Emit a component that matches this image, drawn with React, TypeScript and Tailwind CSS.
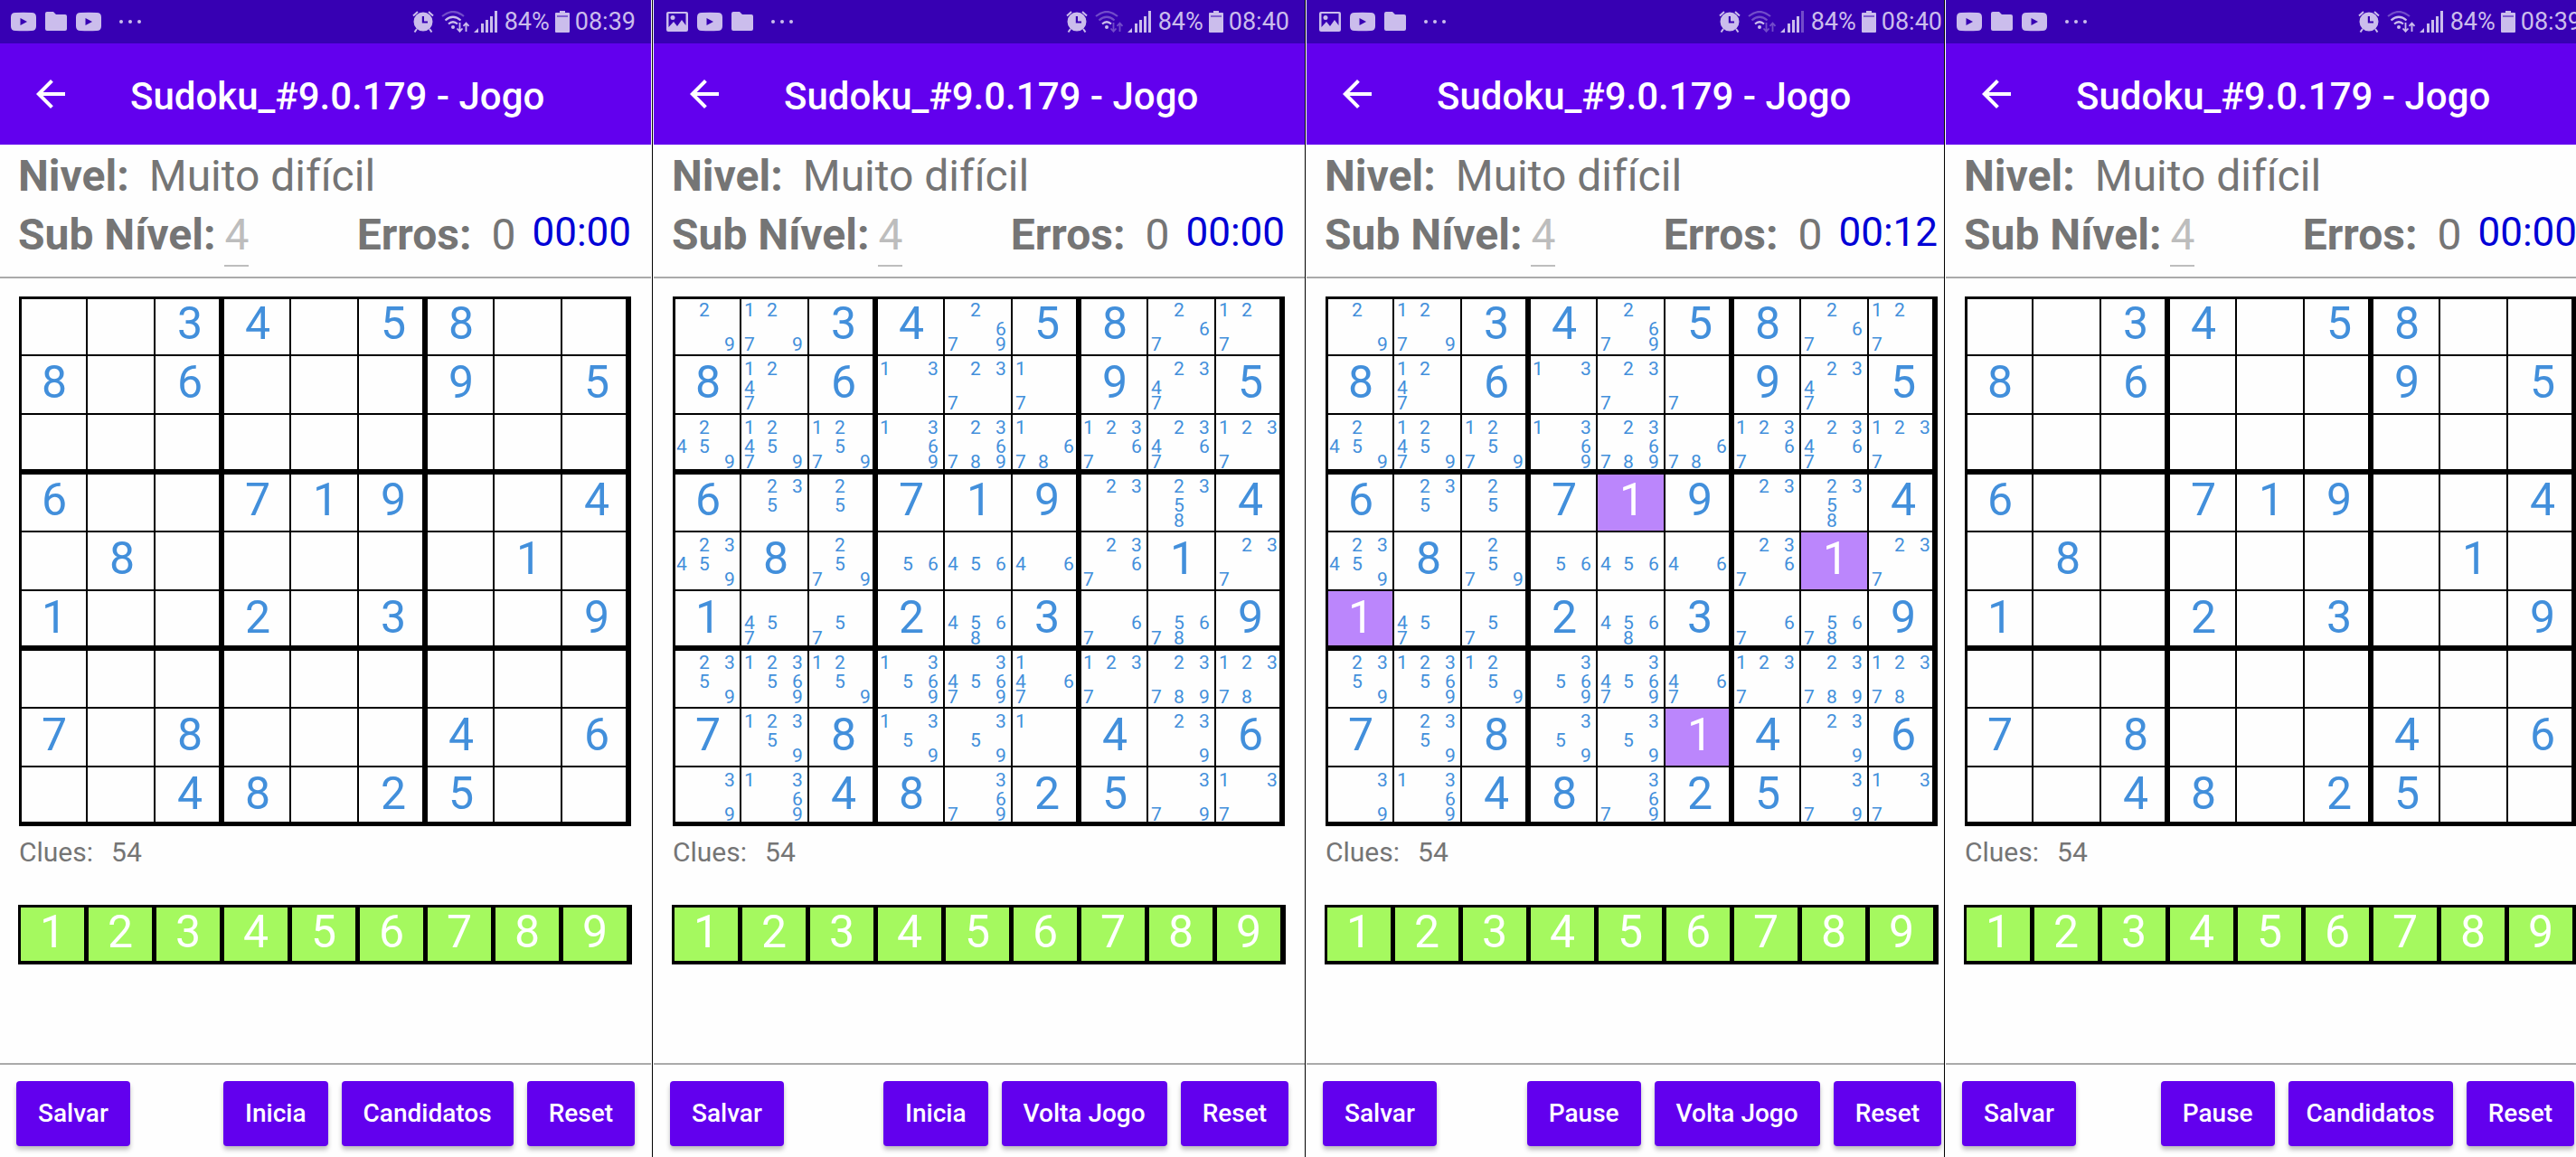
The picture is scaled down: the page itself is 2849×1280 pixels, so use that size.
import React from "react";

type IconName = "play" | "folder" | "image";

type Action = { label: string; tight?: boolean };

type Screen = {
  icons: IconName[];
  clock: string;
  timer: string;
  wifi: "strong" | "idle";
  weakSignal: boolean;
  showCandidates: boolean;
  highlightOnes: boolean;
  actions: Action[];
  bleed: string;
  footerInset: string;
};

const GIVENS = [
  "003405800",
  "806000905",
  "000000000",
  "600719004",
  "080000010",
  "100203009",
  "000000000",
  "708000406",
  "004802500",
];

const CANDIDATES = [
  ["29", "1279", "", "", "2679", "", "", "267", "127"],
  ["", "1247", "", "13", "237", "17", "", "2347", ""],
  ["2459", "124579", "12579", "1369", "236789", "1678", "12367", "23467", "1237"],
  ["", "235", "25", "", "", "", "23", "2358", ""],
  ["23459", "", "2579", "56", "456", "46", "2367", "", "237"],
  ["", "457", "57", "", "4568", "", "67", "5678", ""],
  ["2359", "123569", "1259", "13569", "345679", "1467", "1237", "23789", "12378"],
  ["", "12359", "", "1359", "359", "1", "", "239", ""],
  ["39", "1369", "", "", "3679", "", "", "379", "137"],
];

/* The same board after a 1 has been placed at row 8, column 6. */
const CANDIDATES_AFTER_MOVE = [
  ["29", "1279", "", "", "2679", "", "", "267", "127"],
  ["", "1247", "", "13", "237", "7", "", "2347", ""],
  ["2459", "124579", "12579", "1369", "236789", "678", "12367", "23467", "1237"],
  ["", "235", "25", "", "", "", "23", "2358", ""],
  ["23459", "", "2579", "56", "456", "46", "2367", "", "237"],
  ["", "457", "57", "", "4568", "", "67", "5678", ""],
  ["2359", "123569", "1259", "3569", "345679", "467", "1237", "23789", "12378"],
  ["", "2359", "", "359", "359", "", "", "239", ""],
  ["39", "1369", "", "", "3679", "", "", "379", "137"],
];

const SCREENS: Screen[] = [
  {
    icons: ["play", "folder", "play"], clock: "08:39", timer: "00:00", wifi: "strong", weakSignal: false,
    showCandidates: false, highlightOnes: false,
    actions: [{ label: "Inicia" }, { label: "Candidatos" }, { label: "Reset" }],
    bleed: "", footerInset: "pr-[18px]",
  },
  {
    icons: ["image", "play", "folder"], clock: "08:40", timer: "00:00", wifi: "idle", weakSignal: false,
    showCandidates: true, highlightOnes: false,
    actions: [{ label: "Inicia" }, { label: "Volta Jogo" }, { label: "Reset" }],
    bleed: "", footerInset: "pr-[18px]",
  },
  {
    icons: ["image", "play", "folder"], clock: "08:40", timer: "00:12", wifi: "idle", weakSignal: true,
    showCandidates: true, highlightOnes: true,
    actions: [{ label: "Pause" }, { label: "Volta Jogo" }, { label: "Reset" }],
    bleed: "-mr-[15px]", footerInset: "pr-[18px]",
  },
  {
    icons: ["play", "folder", "play"], clock: "08:39", timer: "00:00", wifi: "strong", weakSignal: false,
    showCandidates: false, highlightOnes: false,
    actions: [{ label: "Pause" }, { label: "Candidatos", tight: true }, { label: "Reset" }],
    bleed: "-mr-[23px]", footerInset: "pr-[25px]",
  },
];

const DIGITS = ["1", "2", "3", "4", "5", "6", "7", "8", "9"];

/* Heavy rules round each 3x3 block, thin rules between cells; padding evens out the inset. */
function columnRules(c: number) {
  if (c === 0) return "border-l-3 pl-0 border-r pr-[3px]";
  if (c % 3 === 0) return "border-l-2 pl-px border-r pr-[3px]";
  if (c % 3 === 1) return "border-l pl-[2px] border-r pr-[3px]";
  return "border-l pl-[2px] border-r-4 pr-0";
}

function rowRules(r: number) {
  if (r === 0) return "border-t-3 pt-0 border-b pb-[3px]";
  if (r % 3 === 0) return "border-t-2 pt-px border-b pb-[3px]";
  if (r % 3 === 1) return "border-t pt-[2px] border-b pb-[3px]";
  return "border-t pt-[2px] border-b-4 pb-0";
}

function NotificationIcon({ name }: { name: IconName }) {
  if (name === "play")
    return (
      <svg width="28" height="22" viewBox="0 0 28 22" fill="currentColor" aria-hidden="true">
        <path fillRule="evenodd" d="M5 1Q14 .4 23 1Q28 1 28 6V16Q28 21 23 21Q14 21.6 5 21Q0 21 0 16V6Q0 1 5 1ZM10.500 7V15L18 11Z" />
      </svg>
    );
  if (name === "folder")
    return (
      <svg width="24" height="22" viewBox="0 0 24 22" fill="currentColor" aria-hidden="true">
        <path d="M2 0H9L12 3H22Q24 3 24 5V19Q24 21 22 21H2Q0 21 0 19V2Q0 0 2 0Z" />
      </svg>
    );
  return (
    <svg width="26" height="22" viewBox="0 0 26 22" fill="currentColor" aria-hidden="true">
      <path fillRule="evenodd" d="M4 0H24Q26 0 26 2V20Q26 22 24 22H4Q2 22 2 20V2Q2 0 4 0ZM4.500 2V17L10 11L14 16L19 9L23.500 15V2Z" />
      <circle cx="9" cy="6.500" r="2.500" />
    </svg>
  );
}

function AlarmIcon() {
  return (
    <svg width="24" height="24" viewBox="0 0 24 24" fill="none" stroke="currentColor" strokeWidth="2" aria-hidden="true">
      <path d="M1 5.500L6 1M23 5.500L18 1M5 20L2.500 23.500M19 20L21.500 23.500" />
      <path fill="currentColor" stroke="none" fillRule="evenodd" d="M12 1.500A10.500 10.500 0 1 1 12 22.500A10.500 10.500 0 1 1 12 1.500ZM10.800 6V13.500H17V11.500H13V6Z" />
    </svg>
  );
}

function WifiIcon({ mode }: { mode: Screen["wifi"] }) {
  const dim = 0.4;
  const strong = mode === "strong";
  return (
    <svg width="32" height="24" viewBox="0 0 32 24" fill="none" stroke="currentColor" strokeWidth="2.200" aria-hidden="true">
      <path opacity={dim} d="M1 6Q13 -4 25 6" />
      <path opacity={strong ? 1 : dim} d="M4.500 10.500Q13 3 21.500 10.500" />
      <path d="M8 14.500Q13 10 18 14.500" />
      <circle cx="13" cy="18" r="2" fill="currentColor" stroke="none" />
      <g opacity={strong ? 1 : dim} strokeWidth="1.800">
        <path d="M20.500 13V22.500M17.500 19.500L20.500 22.800L23.500 19.500" />
        <path d="M27.500 23V13.500M24.500 16.800L27.500 13.500L30.500 16.800" />
      </g>
    </svg>
  );
}

function SignalIcon({ weak }: { weak: boolean }) {
  return (
    <svg width="26" height="24" viewBox="0 0 26 24" fill="currentColor" aria-hidden="true">
      <path d="M0 24L5 19V24Z" />
      <rect x="8" y="14" width="3" height="10" />
      <rect x="13" y="10" width="3" height="14" />
      <rect x="18" y="6" width="3" height="18" />
      <rect x="23" y="0" width="3" height="24" opacity={weak ? 0.4 : 1} />
    </svg>
  );
}

function BatteryIcon() {
  return (
    <svg width="16" height="24" viewBox="0 0 16 24" fill="currentColor" aria-hidden="true">
      <path d="M5 0H11V2H15Q16 2 16 3V23Q16 24 15 24H1Q0 24 0 23V3Q0 2 1 2H5Z" />
      <rect x="2" y="5" width="12" height="2" fill="#3700b3" opacity="0.5" />
    </svg>
  );
}

function StatusBar({ screen }: { screen: Screen }) {
  return (
    <div className="flex h-12 items-center bg-[#3700b3] pr-[17px] pl-3 text-[#cbbdec]">
      <div className="flex items-center gap-[10px]">
        {screen.icons.map((name, i) => (
          <NotificationIcon key={i} name={name} />
        ))}
        <svg className="ml-[10px]" width="24" height="4" viewBox="0 0 24 4" fill="currentColor" aria-hidden="true">
          <circle cx="2" cy="2" r="2" />
          <circle cx="12" cy="2" r="2" />
          <circle cx="22" cy="2" r="2" />
        </svg>
      </div>
      <div className="ml-auto flex items-center text-[27px] leading-none">
        <AlarmIcon />
        <span className="ml-2 flex">
          <WifiIcon mode={screen.wifi} />
        </span>
        <span className="ml-1 flex">
          <SignalIcon weak={screen.weakSignal} />
        </span>
        <span className="ml-2">84%</span>
        <span className="mx-[6px] flex">
          <BatteryIcon />
        </span>
        <span>{screen.clock}</span>
      </div>
    </div>
  );
}

function Cell({ r, c, screen }: { r: number; c: number; screen: Screen }) {
  const table = screen.highlightOnes ? CANDIDATES_AFTER_MOVE : CANDIDATES;
  const placed = screen.highlightOnes && r === 7 && c === 5;
  const value = placed ? "1" : GIVENS[r][c];
  const lit = screen.highlightOnes && value === "1";
  const rules = `border-black p-0 align-top ${columnRules(c)} ${rowRules(r)}`;

  if (value !== "0")
    return (
      <td className={`${rules} ${lit ? "bg-[#bb86fc] text-white" : "text-[#428fdb]"}`}>
        <div className="h-[58px] pl-1 text-center text-[50px] leading-[54px]">{value}</div>
      </td>
    );

  return (
    <td className={`${rules} text-[#428fdb]`}>
      <div className="grid h-[58px] grid-cols-[25px_28px_auto] grid-rows-[24px_18px_16px] items-center pl-px text-[21px] leading-[16px]">
        {screen.showCandidates &&
          DIGITS.map((d) => <span key={d}>{table[r][c].includes(d) ? d : ""}</span>)}
      </div>
    </td>
  );
}

function Board({ screen }: { screen: Screen }) {
  return (
    <table className="w-full table-fixed border-separate border-spacing-0 border-r-2 border-b border-black" aria-label="Sudoku">
      <tbody>
        {GIVENS.map((row, r) => (
          <tr key={r}>
            {row.split("").map((_, c) => (
              <Cell key={c} r={r} c={c} screen={screen} />
            ))}
          </tr>
        ))}
      </tbody>
    </table>
  );
}

function ActionButton({ label, tight }: Action) {
  return (
    <button
      type="button"
      className={`h-[72px] rounded-[4px] bg-[#6200ee] text-[28px] font-medium text-white shadow-[0_4px_5px_rgba(0,0,0,0.25)] ${tight ? "px-5" : "px-6"}`}
    >
      {label}
    </button>
  );
}

function Phone({ screen, id }: { screen: Screen; id: number }) {
  return (
    <section className="min-w-0 overflow-hidden">
      <div className={`flex min-h-screen flex-col ${screen.bleed}`}>
        <StatusBar screen={screen} />
        <header className="flex h-28 items-center bg-[#6200ee] pl-8 text-white">
          <button type="button" aria-label="Voltar">
            <svg width="48" height="48" viewBox="0 0 24 24" fill="currentColor" aria-hidden="true">
              <path d="M20 11H7.830l5.590-5.590L12 4l-8 8 8 8 1.410-1.410L7.830 13H20v-2z" />
            </svg>
          </button>
          <h1 className="ml-16 pt-1 text-[42px] font-medium whitespace-nowrap">Sudoku_#9.0.179 - Jogo</h1>
        </header>

        <div className="border-b-2 border-[#aaaaaa] pr-[22px] pl-5 text-[48px] text-[#757575]">
          <div className="flex h-[70px] items-center gap-[22px] leading-none">
            <span className="font-bold">Nivel:</span>
            <span>Muito difícil</span>
          </div>
          <div className="flex h-[76px] items-start leading-[60px]">
            <label htmlFor={`sub-nivel-${id}`} className="font-bold whitespace-nowrap">Sub Nível:</label>
            <input
              id={`sub-nivel-${id}`}
              defaultValue="4"
              className="ml-[10px] h-[65px] w-[27px] border-b-2 border-[#bdbdbd] pb-[5px] text-[#bdbdbd] outline-none"
            />
            <span className="ml-auto font-bold">Erros:</span>
            <span className="ml-[22px]">0</span>
            <span className="ml-[18px] text-[44px] leading-[54px] text-[#0000d6]">{screen.timer}</span>
          </div>
        </div>

        <main className="flex flex-1 flex-col pt-5 pr-[22px] pl-[21px]">
          <Board screen={screen} />
          <p className="mt-2 flex h-10 items-center gap-5 text-[30px] text-[#757575]">
            <span>Clues:</span>
            <span>54</span>
          </p>
          <div className="mt-[39px] -mr-px -ml-px grid grid-cols-9 gap-[5px] border-t-3 border-r-6 border-b-4 border-l-3 border-black bg-black">
            {DIGITS.map((d) => (
              <button key={d} type="button" className="h-[59px] bg-[#a5f95f] pb-1 text-[50px] leading-[55px] text-white">
                {d}
              </button>
            ))}
          </div>
        </main>

        <footer className={`flex border-t-2 border-[#aaaaaa] pt-[18px] pb-3 pl-[18px] ${screen.footerInset}`}>
          <ActionButton label="Salvar" />
          <div className="ml-auto flex gap-[15px] whitespace-nowrap">
            {screen.actions.map((action) => (
              <ActionButton key={action.label} label={action.label} tight={action.tight} />
            ))}
          </div>
        </footer>
      </div>
    </section>
  );
}

export default function App() {
  return (
    <div className="grid min-h-screen grid-cols-[720fr_3px_720fr_2px_705fr_2px_697fr] bg-[#fefefe] font-['Roboto',sans-serif]">
      {SCREENS.map((screen, i) => (
        <React.Fragment key={i}>
          {i > 0 && <div className={i === 1 ? "mx-px bg-black" : "mr-px bg-black"} />}
          <Phone screen={screen} id={i} />
        </React.Fragment>
      ))}
    </div>
  );
}
